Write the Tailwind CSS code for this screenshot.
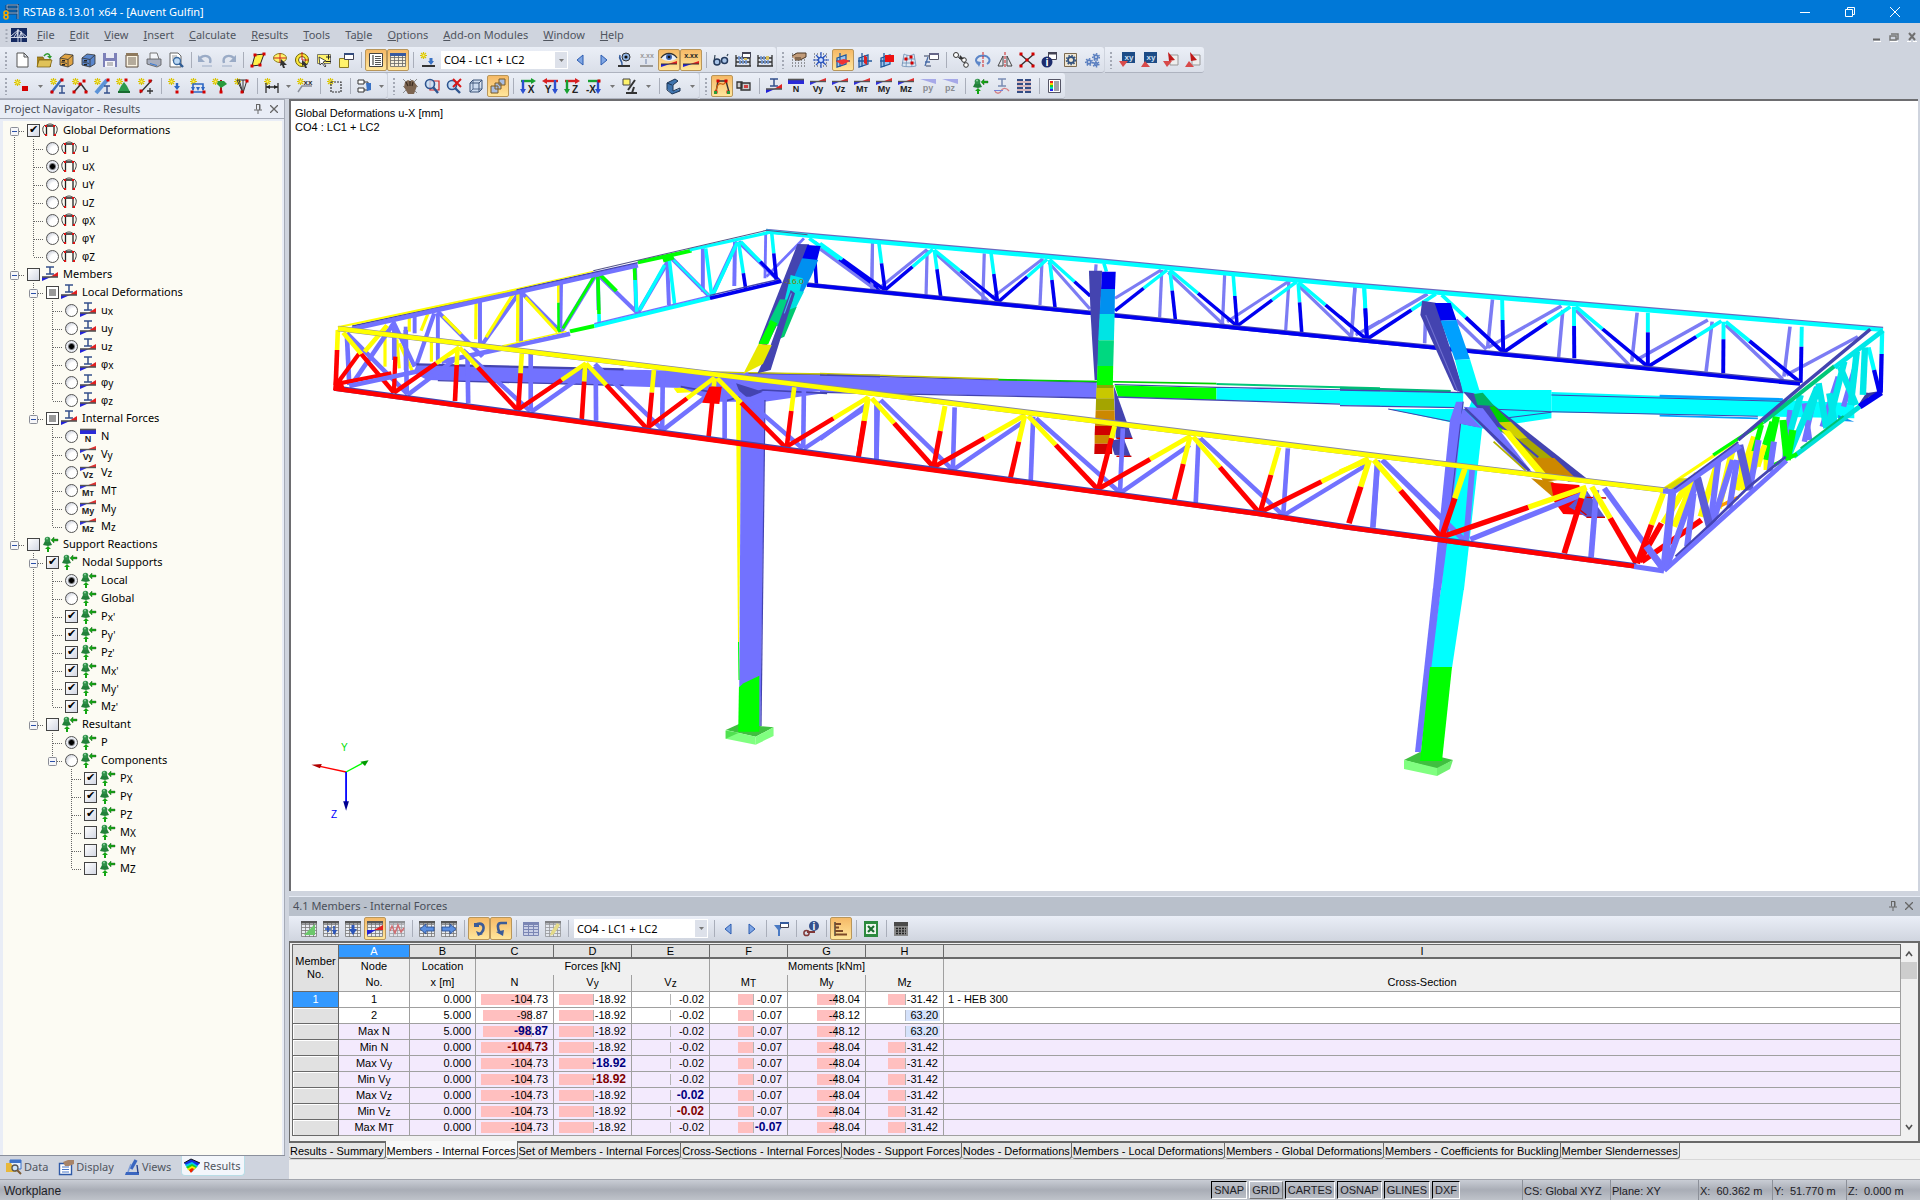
<!DOCTYPE html>
<html lang="en">
<head>
    <meta charset="UTF-8">
    <meta name="viewport" content="width=device-width, initial-scale=1.0">
    <title>RSTAB 8.13.01 x64 - [Auvent Gulfin]</title>
    <script src="https://cdn.jsdelivr.net/npm/@tailwindcss/browser@4"></script>
</head>
<body class="h-screen flex flex-col overflow-hidden bg-[#cfd4de] font-['Noto_Sans','Open_Sans',sans-serif] text-[11px] leading-4 text-black select-none">

    <!-- Title bar -->
    <header class="h-[23px] shrink-0 flex items-center bg-[#0078d7] text-white pl-[3px] pr-[2px]">
        <svg class="w-4 h-4 mr-1" viewBox="0 0 16 16"><path d="M4 1h11v14M4 1v4h11M5 9h10" fill="none" stroke="#1d3f66" stroke-width="3"/><path d="M4 1h11v14M4 1v4h11M5 9h10" fill="none" stroke="#8fb6dc" stroke-width="1"/><circle cx="3" cy="9" r="2" fill="none" stroke="#f0a800" stroke-width="1.6"/><circle cx="3" cy="13" r="2" fill="none" stroke="#f0a800" stroke-width="1.6"/></svg>
        <h1 class="flex-1">RSTAB 8.13.01 x64 - [Auvent Gulfin]</h1>
        <button class="w-[45px] h-full grid place-items-center" title="Minimize"><svg class="w-[10px] h-[10px]" viewBox="0 0 10 10"><path d="M0 5.500h10" stroke="#fff"/></svg></button>
        <button class="w-[45px] h-full grid place-items-center" title="Restore"><svg class="w-[10px] h-[10px]" viewBox="0 0 10 10"><path d="M.5 2.500h7v7h-7zM2.500 2.500v-2h7v7h-2" fill="none" stroke="#fff"/></svg></button>
        <button class="w-[46px] h-full grid place-items-center" title="Close"><svg class="w-[10px] h-[10px]" viewBox="0 0 10 10"><path d="M0 0l10 10M10 0L0 10" stroke="#fff"/></svg></button>
    </header>

    <!-- Menu -->
    <nav class="h-6 shrink-0 flex items-center pl-[5px] text-[#50555f]">
        <svg class="w-1 h-4 mr-[2px]" viewBox="0 0 4 16"><path d="M1.500 2v13" stroke="#a4a9b5" stroke-width="2" stroke-dasharray="2 2"/></svg>
        <svg class="w-4 h-[14px] mr-[3px]" viewBox="0 0 16 14"><path d="M0 0h16v14H0z" fill="#152a62"/><path d="M0 9.500h16M7 1v13M10 3v11M0 8l7-6 3 2 6 5M3 9l4-6M7 3l-1 6M10 5l-2 4M10 5l3 4" stroke="#e4e9f5" stroke-width=".9" fill="none"/></svg>
        <div class="flex-1 flex gap-px" id="menu"></div>
        <div class="flex gap-2 pr-[3px] pt-[3px] items-center">
            <svg class="w-2 h-3" viewBox="0 0 8 12"><path d="M0 8.500h7" stroke="#666" stroke-width="2"/><path d="M1 10.500h7" stroke="#fff"/></svg>
            <svg class="w-[10px] h-3" viewBox="0 0 10 12"><path d="M2 3h7v5H7M1 5h6v4H1z" fill="none" stroke="#777" stroke-width="1.500"/><path d="M1 10.500h8" stroke="#fff"/></svg>
            <svg class="w-[10px] h-3" viewBox="0 0 10 12"><path d="M2 2l6 7M8 2L2 9" stroke="#707070" stroke-width="2"/><path d="M0 10.500h4M6 10.500h4" stroke="#fff"/></svg>
        </div>
    </nav>

    <!-- Toolbars -->
    <div class="h-[26px] shrink-0 flex gap-px" id="bar1"></div>
    <div class="h-[26px] shrink-0 flex gap-px" id="bar2"></div>

    <main class="flex-1 min-h-0 flex">
        <!-- Navigator -->
        <aside class="w-[285px] shrink-0 flex flex-col">
            <div class="flex-1 min-h-0 flex flex-col border-t border-r border-[#a5aab6] bg-[#e9edf6]">
                <div class="h-[19px] flex items-center pl-1 pr-[2px] text-[#4a4f59] border-b border-[#a5aab6]">
                    <h2 class="flex-1">Project Navigator - Results</h2>
                    <button class="w-4 grid place-items-center" title="Auto hide"><svg class="w-2 h-[10px]" viewBox="0 0 8 10"><path d="M2 .5h4v5M2.500 .5v5M5.500 1v5M0 6h8M4 6v4" fill="none" stroke="#666"/></svg></button>
                    <button class="w-4 grid place-items-center" title="Close"><svg class="w-2 h-2" viewBox="0 0 8 8"><path d="M0 0l8 8M8 0L0 8" stroke="#666" stroke-width="1.300"/></svg></button>
                </div>
                <div id="tree" class="flex-1 overflow-hidden bg-[#fcfbf3] ml-[3px] mr-[2px] mt-[2px] pl-[2px] text-black"></div>
            </div>
            <div class="h-6 shrink-0 flex items-start pl-[3px] text-[#50555f] border-t border-[#8b909c]" id="navtabs"></div>
        </aside>

        <section class="flex-1 min-w-0 flex flex-col pl-1">
            <!-- Model view -->
            <div class="flex-1 min-h-0 bg-white border-t-2 border-l-2 border-[#6d6d70] mr-[2px] relative">
                <svg id="model" class="w-full h-full" viewBox="291 101 1627 790" preserveAspectRatio="xMinYMin meet"></svg>
                <div class="absolute left-1 top-[5px] font-['Liberation_Sans',sans-serif] text-[11px] leading-[14px]">
                    <p>Global Deformations u-X [mm]</p>
                    <p>CO4 : LC1 + LC2</p>
                </div>
            </div>

            <!-- Result table -->
            <div class="h-[6px] shrink-0 border-b border-[#e6ebf5]"></div>
            <div class="h-[19px] shrink-0 flex items-center bg-[#b9c0cb] pl-1 pr-[3px] pb-px text-[#4a4f59]">
                <h2 class="flex-1">4.1 Members - Internal Forces</h2>
                <button class="w-4 grid place-items-center" title="Auto hide"><svg class="w-2 h-[10px]" viewBox="0 0 8 10"><path d="M2 .5h4v5M2.500 .5v5M5.500 1v5M0 6h8M4 6v4" fill="none" stroke="#666"/></svg></button>
                <button class="w-4 grid place-items-center" title="Close"><svg class="w-2 h-2" viewBox="0 0 8 8"><path d="M0 0l8 8M8 0L0 8" stroke="#666" stroke-width="1.300"/></svg></button>
            </div>
            <div class="h-[25px] shrink-0 flex bg-gradient-to-b from-[#eaeef7] to-[#d0d5df] pl-px" id="bar3"></div>
            <div class="h-[202px] shrink-0 flex border-t-2 border-b-2 border-l border-r-2 border-[#696969] bg-[#f0f0f0] pt-px pl-[2px] font-['Liberation_Sans',sans-serif]">
                <table class="flex-1 table-fixed border-separate border-spacing-0 w-full self-start border-l border-t border-[#696969]">
                    <colgroup>
                        <col class="w-[46px]"><col class="w-[71px]"><col class="w-[66px]"><col class="w-[78px]"><col class="w-[78px]"><col class="w-[78px]"><col class="w-[78px]"><col class="w-[78px]"><col class="w-[78px]"><col>
                    </colgroup>
                    <thead id="thead"></thead>
                    <tbody id="tbody"></tbody>
                </table>
                <div class="w-4 shrink-0 mr-px flex flex-col items-center pt-[5px]">
                    <svg class="w-2 h-[10px]" viewBox="0 0 8 10"><path d="M1 7l3-4 3 4" fill="none" stroke="#505050" stroke-width="1.600"/></svg>
                    <div class="w-4 h-[17px] bg-[#cdcdcd] mt-[3px]"></div>
                    <div class="flex-1"></div>
                    <svg class="w-2 h-[10px] mb-[9px]" viewBox="0 0 8 10"><path d="M1 3l3 4 3-4" fill="none" stroke="#505050" stroke-width="1.600"/></svg>
                </div>
            </div>
            <div class="h-[17px] shrink-0 flex bg-[#f0f0f0] font-['Liberation_Sans',sans-serif] border-b border-[#d8d8d8]" id="tabs"></div>
            <div class="h-[19px] shrink-0 bg-[#f0f0f0]"></div>
        </section>
    </main>

    <!-- Status bar -->
    <footer class="h-[21px] shrink-0 flex items-stretch border-t border-[#a2a5ad] bg-gradient-to-b from-[#c9cdd5] via-[#a9adb6] to-[#bfc3ca] font-['Liberation_Sans',sans-serif] text-[#1e2126]">
        <span class="flex-1 pl-1 pt-[3px] text-[12px]">Workplane</span>
        <div class="flex gap-[2px] pt-px pb-px mr-[62px]" id="modes"></div>
        <span class="w-[88px] border-l border-[#8c9099] pl-px pt-[3px]">CS: Global XYZ</span>
        <span class="w-[88px] border-l border-[#8c9099] pl-px pt-[3px]">Plane: XY</span>
        <span class="w-[74px] border-l border-[#8c9099] pl-px pt-[3px] whitespace-pre">X:  60.362 m</span>
        <span class="w-[74px] border-l border-[#8c9099] pl-px pt-[3px] whitespace-pre">Y:  51.770 m</span>
        <span class="w-[74px] border-l border-[#8c9099] pl-px pt-[3px] whitespace-pre">Z:  0.000 m</span>
    </footer>

    <script>
    const $ = id => document.getElementById(id);

    // ---------- icons (16 x 16) ----------
    const p = (d, s, w = 1, f = 'none') => `<path d="${d}" stroke="${s}" stroke-width="${w}" fill="${f}"/>`;
    const fill = (d, f) => `<path d="${d}" fill="${f}"/>`;
    const txt = (t, x, y, c = '#222', s = 9) => `<text x="${x}" y="${y}" fill="${c}" font-size="${s}" font-weight="bold" font-family="Liberation Sans" text-anchor="middle">${t}</text>`;
    const spark = p('M3.500 0v7M0 3.500h7M1 1l5 5M6 1L1 6', '#d9c400', 1.200) + fill('M2.500 2.500h2v2h-2z', '#fff36b');
    const dots = (...a) => a.map(([x, y]) => fill(`M${x - 1.5} ${y - 1.5}h3v3h-3z`, '#d40000')).join('');
    const beam = (x, y) => p(`M${x} ${y}h6M${x} ${y + 7}h6M${x + 3} ${y}v7`, '#34508c', 1.400);
    const force = (t, c = '#222') => fill('M0 3h9L0 7z', '#3030dd') + fill('M16 0v3.500H7z', '#e03030') + p('M0 3.500h16', '#555', 1.400) + txt(t, 8, 14, c, 9);
    const drawer = c => fill('M2 6l5-4 8 1v9l-5 3-8-2z', c) + p('M2 6l8 1.500v7.500M10 7.500l5-4.500M3 10l6 1.500', '#333', .8) + p('M2 6l5-4 8 1v9l-5 3-8-2z', '#333', .8) + fill('M4 8h3v1.500H4zM4 12h3v1.500H4z', '#222');
    const sheet = p('M.5 .5h15v15H.5zM.5 3.500h15M.5 6.500h15M.5 9.500h15M.5 12.500h15M4.500 0v16M8.500 0v16M12.500 0v16', '#777', .8, '#e8ebf0') + fill('M0 0h16v2.500H0z', '#555');
    const axes = (t, a, b) => p('M1 3h12', a, 2.400) + p('M3 2v12', b, 2.400) + fill('M11 0l5 3-5 3z', a) + fill('M0 11h6l-3 5z', b) + txt(t, 11, 15, '#222', 10);
    const plane = c => fill('M2 6l9-3v9l-9 3z', '#9bc4ee') + p('M2 6l9-3v9l-9 3zM5 1v14M1 9h14', '#245a9c', 1.300) + c;
    const gear = (x, y, r, c) => `<circle cx="${x}" cy="${y}" r="${r}" fill="none" stroke="${c}" stroke-width="1.800"/><circle cx="${x}" cy="${y}" r="${r + 1.5}" fill="none" stroke="${c}" stroke-width="1.500" stroke-dasharray="1.500 1.500"/>`;
    const cube = p('M2 5h9v9H2zM2 5l3-3h9l-3 3M14 2v9l-3 3', '#3c5478', 1, '#cddcf0');
    const grid = p('M1 2h14M1 5h14M1 8h14M1 11h14M1 14h14', '#444', 1.200).replace('/>', ' stroke-dasharray="1 2"/>');
    const abacus = p('M1 3v11M15 3v11M1 6h14M1 10h14M0 14h16', '#333', 1.300) + p('M3 6h9M4 10h9', '#6d90c8', 3.400).replace('/>', ' stroke-dasharray="2 1"/>') + fill('M9 4h3v4H9z', '#d8c060');
    const icons = {
        new: p('M3 1h7l4 4v10H3zM10 1v4h4', '#555', 1, '#fff'),
        open: fill('M1 5h6l1 2h7v8H1z', '#a8841c') + fill('M3 8h13l-2 7H1z', '#e0c258') + p('M1 5h6l1 2M3 8h13l-2 7H1z', '#6d5610', .7) + p('M8 4c2-3 5-3 6 0', '#2f9a2f', 1.500) + fill('M11 4h5l-2 3z', '#2f9a2f'),
        cabA: drawer('#e0a445'), cabB: drawer('#5a86cc'),
        save: fill('M1 1h14v14H1z', '#7c80b8') + fill('M4 1h8v5H4z', '#e8eaf4') + fill('M3 9h10v6H3z', '#f4f4fa') + p('M5 11h6M5 13h6', '#888'),
        report: p('M2 3h12v12H2z', '#5a4b3d', 1, '#faf3e2') + fill('M2 1h12v3H2z', '#8f7a5e') + p('M4 6h8M4 8h8M4 10h8M4 12h8', '#6f6255'),
        print: fill('M4 1h7l2 6H3z', '#f4f6fa') + p('M4 1h7l2 6M4 1v6', '#777') + fill('M1 7h14v6l-4 2-10-3z', '#a9afbf') + p('M1 7h14v6l-4 2-10-3z', '#555', .8) + fill('M4 11l7 2v1l-7-2z', '#3478d4'),
        preview: p('M2 1h8l3 3v11H2z', '#666', 1, '#fff') + p('M4 4h5M4 6h4M4 8h3', '#999') + `<circle cx="9" cy="9" r="3.500" fill="#bcd9f5" stroke="#3b6aa0" stroke-width="1.300"/>` + p('M11.500 11.500L15 15', '#2f5c94', 2.400),
        undo: p('M2 6c5-4 12-2 10 5', '#9aabc6', 2.400) + fill('M0 3v7h7z', '#9aabc6') + p('M4 14h10', '#b3bfd3', 1.500),
        redo: p('M14 6C9 2 2 4 4 11', '#9aabc6', 2.400) + fill('M16 3v7H9z', '#9aabc6') + p('M2 14h10', '#b3bfd3', 1.500),
        selPoly: p('M5 3l9-1-4 11-8 1z', '#222', 1, '#fff04a') + dots([5, 3], [14, 2], [2, 14], [10, 13]),
        selLasso: `<ellipse cx="8" cy="6" rx="6.500" ry="4.500" fill="#fff36b" stroke="#8a7a20"/>` + p('M8 1v10M2 6h12', '#d02020') + fill('M9 7l6 6-3 0 1 3-2 0-1-3-2 1z', '#333'),
        selCirc: `<circle cx="8" cy="8" r="6.500" fill="#ffe93b" stroke="#6b6000"/><circle cx="8" cy="8" r="3.500" fill="#eef1f8" stroke="#6b6000"/>` + p('M8 0v8M8 8h6', '#d02020') + fill('M8 8l6 5-2 0 1 3-2 0-1-3-2 1z', '#333'),
        selRect: fill('M1 2h14v10H1z', '#fff36b') + p('M1.500 2.500h13v9h-13z', '#777') + fill('M3 5l7 4-3 1 3 4-1 1-3-4-2 2z', '#fff') + p('M3 5l7 4-3 1 3 4-1 1-3-4-2 2z', '#222', .8) + p('M10 5h5M12.500 2.500v5M10 9.500h5', '#222'),
        selWin: p('M1.500 6.500h9v9h-9z', '#8a7a20', 1, '#fff36b') + p('M6.500 1.500h9v6h-9z', '#445', 1, '#fff') + fill('M6 1h10v2H6z', '#334b7c'),
        navi: p('M1.500 1.500h13v13h-13z', '#444', 1, '#fff') + p('M4 4h2M4 6h2M4 8h2M4 10h2M4 12h2', '#222') + p('M7 4.500h6M7 6.500h6M7 8.500h6M7 10.500h6M7 12.500h6', '#555'),
        table: p('M.5 1.500h15v13H.5zM.5 5.500h15M.5 8.500h15M.5 11.500h15M4.500 4v10M8.500 4v10M12.500 4v10', '#666', .8, '#f6f0dc') + fill('M0 1h16v3H0z', '#375aa0'),
        loadNew: spark + p('M2 14h13', '#333', 2) + p('M11 6v5', '#3a72c4', 3) + fill('M8 9h6l-3 4z', '#3a72c4'),
        prev: p('M10 3v10L4 8z', '#2d5cb0', 1, '#7fa6e4'), next: p('M6 3v10l6-5z', '#2d5cb0', 1, '#7fa6e4'),
        eyeLoad: `<circle cx="9" cy="5" r="4" fill="#8fb4e4" stroke="#333"/><circle cx="9" cy="5" r="1.600" fill="#111"/>` + p('M3 3C1 8 6 8 5 13', '#345c9c', 1.600) + p('M1 14h12', '#333', 2),
        xxx: txt('x.xx', 8, 6, '#999', 7) + p('M7 7v5', '#a8b4cc', 2) + p('M1 14h13', '#999', 2),
        eyeRes: fill('M0 6c4-6 12-6 16 0-4 4-12 4-16 0z', '#e7eefa') + p('M0 6c4-6 12-6 16 0', '#333', 1.300) + `<circle cx="8" cy="5" r="3" fill="#3c62a8"/><circle cx="8" cy="5" r="1.300" fill="#111"/>` + fill('M0 12h9l-9 3z', '#2222d8') + fill('M16 9v3H7z', '#e02020') + p('M0 12h16', '#333'),
        xxxRes: txt('x.xx', 8, 6, '#222', 7) + fill('M0 12h9l-9 3z', '#2222d8') + fill('M16 9v3H7z', '#e02020') + p('M0 12h16', '#333'),
        glasses: p('M2 3l-1 7M14 4l1-2', '#345', 1.200) + `<circle cx="4" cy="10" r="3" fill="#a8c4e8" stroke="#23395c" stroke-width="1.500"/><circle cx="11.500" cy="8.500" r="3" fill="#a8c4e8" stroke="#23395c" stroke-width="1.500"/>`,
        abacusWin: abacus + p('M7.500 .5h8v5h-8z', '#445', 1, '#fff') + fill('M7 0h9v2H7z', '#445'),
        abacus: abacus,
        handGrid: grid + fill('M1 4l5-3 9 0v4l-6 3-5 0z', '#c09a78') + p('M1 4l5-3h9v4l-6 3-5 0M4 6l6 0', '#4d3826', 1),
        snapGrid: grid + p('M8 0v16M0 8h16M3 3l10 10M13 3L3 13', '#2b55c0', 1.200) + `<circle cx="8" cy="8" r="2.600" fill="#cfe0ff" stroke="#2b55c0" stroke-width="1.400"/>`,
        planeXY: plane(fill('M1 9l8-2 6 2-8 4z', '#e33')), planeYZ: plane(fill('M7 3l3 2v8l-3-2z', '#d22')), planeXZ: plane(fill('M6 3h9v7H6z', '#e11')),
        surf: p('M3 2c4 2 7 2 10 0l2 12c-4 1-10 1-14 0zM6 3L5 15M10 3l1 12M2 7h12M1 11h13', '#7795b8', .9, '#dfe9f5') + dots([5, 7], [10, 5], [11, 11]),
        note: p('M2 14l3-9M2 10h5', '#4a6da8', 1.300) + p('M6.500 1.500h9v6h-9z', '#556', 1, '#fff') + fill('M6 1h10v2H6z', '#668') + p('M1 4h5M3 14h5', '#8a93a8', 2),
        copyN: p('M3 3l10 9', '#333') + `<circle cx="3" cy="3" r="2.500" fill="#fff" stroke="#333"/><circle cx="11" cy="8" r="2.300" fill="#fff" stroke="#333"/><circle cx="13" cy="13" r="2.300" fill="#fff" stroke="#333"/>` + fill('M7 3l4 4h-5z', '#333'),
        rotate: p('M3 12C-2 7 4 3 8 4M12 12c6-4 0-9-4-8', '#5c86c8', 2) + fill('M1 9l5 1-2 5z', '#5c86c8') + p('M8 0v16', '#d02020').replace('/>', ' stroke-dasharray="3 1"/>'),
        mirror: p('M6 4v10H1zM10 4v10h5z', '#444', 1, '#e5e8f0') + p('M8 0v16', '#d02020').replace('/>', ' stroke-dasharray="3 1"/>'),
        cross: p('M1 2l14 12M15 2L1 14', '#333', 1.400) + dots([2, 2], [14, 2], [2, 14], [14, 14], [8, 8]),
        infoWin: p('M7.500 .5h8v7h-8z', '#445', 1, '#fff') + fill('M7 0h9v2.500H7z', '#445') + `<circle cx="6" cy="10" r="5.500" fill="#1d2c6c"/>` + txt('i', 6, 14, '#fff', 11),
        gearDoc: p('M1.500 1.500h12v13h-12z', '#7c6a50', 1, '#efe6d2') + gear(8, 8, 3, '#34537f'),
        gears: gear(4, 10, 1.800, '#5a7fc0') + gear(11, 5, 1.800, '#5a7fc0') + gear(11, 12, 1.300, '#5a7fc0'),
        xyA: fill('M3 0h13v11H3z', '#1d4c86') + txt('xy', 10, 8, '#cfe0f4', 8) + fill('M0 9h9l-5 6z', '#d84a4a'),
        xyB: fill('M3 0h13v11H3z', '#1d4c86') + txt('xy', 10, 8, '#cfe0f4', 8) + fill('M0 15h9l-5-6z', '#d84a4a'),
        pdfA: p('M7 3h8v10H7z', '#999', 1, '#eee') + fill('M5 0l7 8-6 1z', '#c01818') + fill('M0 9h9l-5 6z', '#d84a4a'),
        pdfB: p('M7 3h8v10H7z', '#999', 1, '#eee') + fill('M5 0l7 8-6 1z', '#c01818') + fill('M0 15h9L4 9z', '#d84a4a'),
        node: `<g transform="translate(0 1)">${spark}</g>` + fill('M8 8h6v5H8z', '#d40000'),
        member: spark + p('M1 15L12 1', '#3a6cb8', 2.400) + dots([12, 2], [2, 14]) + beam(9, 8),
        poly: spark + p('M2 14l7-8 6 8', '#333', 1.500) + dots([2, 14], [8, 6], [14, 14], [12, 3]),
        section: spark + p('M2 15L13 2', '#5b93d8', 4) + dots([14, 2]) + beam(10, 8),
        support: spark + fill('M5 8l3-4 3 4 3 6H2z', '#2c9a4c') + dots([10, 2]) + p('M2 14h12', '#196c30', 2),
        hinge: spark + p('M2 15L14 2M9 13h6M12 10v6', '#333', 1.300) + dots([12, 3], [3, 13]),
        loadN: spark + p('M9 5v5', '#2c66c4', 2.400) + fill('M6 8h6l-3 4z', '#2c66c4') + dots([9, 14]),
        loadM: spark + p('M3 12V6h10v6M1 14h14', '#2c66c4', 1.600) + fill('M1 9h4l-2 4zM11 9h4l-2 4zM6 9h4l-2 4z', '#2c66c4') + dots([2, 14], [14, 14]),
        loadP: spark + p('M9 2v12', '#b01010', 2) + fill('M6 3h6l3 3-6 4-4-4z', '#2a9a3c') + dots([9, 14]),
        loadF: spark + p('M3 2h10l-4 13zM5 2l4 13M9 2v13', '#333', 1) + dots([13, 3], [8, 14]),
        dim: spark + p('M2 5v10M14 5v10M2 9h12', '#333', 1.300) + fill('M2 9l4-2v4zM14 9l-4-2v4z', '#222'),
        dimX: spark + txt('xx', 11, 7, '#333', 8) + p('M1 14l4-6h10', '#8a8f9a', 1.500),
        box: spark + p('M4 4h10v10H4z', '#333', 1.200).replace('/>', ' stroke-dasharray="2 1"/>'),
        conn: p('M1 2h6v4H1zM1 10h6v4H1z', '#333', 1, '#fff') + p('M7 4h4v8H7', '#333') + fill('M9 5h5v7l-4 1z', '#3a72c4'),
        hand: p('M1 1l14 14M1 8l8 8M8 1l8 8M15 1L1 15', '#777', .8) + fill('M3 4l3-2 2 1 3-1 2 3 2 3-3 8H6L2 9z', '#7c6450') + p('M4 4l2 4M8 3v5M11 4l-1 4', '#3c2e22', 1.200),
        zoomR: p('M6 3h9v9H6z', '#d02020', 1.200) + `<circle cx="6" cy="6" r="4.500" fill="#c6ddf5" fill-opacity=".8" stroke="#2f5590" stroke-width="1.600"/>` + p('M9 9l5 6', '#2f5590', 2.400),
        zoomX: `<circle cx="6" cy="7" r="4.500" fill="#c6ddf5" stroke="#2f5590" stroke-width="1.600"/>` + p('M9 10l5 5', '#2f5590', 2.400) + p('M7 1l8 8M15 1L7 9', '#d81818', 2),
        iso: cube + p('M5 2v9H14M5 11l-3 3', '#3c5478', .8),
        layers: p('M1 8h7v7H1zM5 5h6v6H5zM9 1h6v6H9z', '#7a5a24', 1, '#a9bde0'),
        vx: axes('X', '#18a030', '#2c50d0'),
        vy: p('M3 3h13', '#d82020', 2.400) + p('M13 2v12', '#2c50d0', 2.400) + fill('M5 0L0 3l5 3z', '#d82020') + fill('M10 11h6l-3 5z', '#2c50d0') + txt('Y', 6, 15, '#222', 10),
        vz: axes('Z', '#d82020', '#18a030'),
        vmx: p('M2 3h12', '#18a030', 2.400) + p('M12 2v12', '#2c50d0', 2.400) + dots([13, 3]) + fill('M9 11h6l-3 5z', '#2c50d0') + txt('-X', 5, 15, '#222', 10),
        lamp: fill('M1 1h7v6H1z', '#fff36b') + p('M1 1h7v6H1z', '#444') + p('M13 2L6 12M4 15h11M10 15l2-6', '#333', 2),
        solid: fill('M1 5l8-4 3 2-5 4v6l7-2v2l-8 3-5-5z', '#3f74ae') + p('M1 5l8-4 3 2-5 4v6l7-3v3l-8 3-5-4zM1 5l5 2', '#1d3555', 1),
        frame: p('M2 14L4 3h8l3 11', '#333', 1.400) + p('M2 14C3 5 6 5 8 6s4-2 5-4', '#d06010', 1.300) + dots([2, 14], [14, 14], [4, 3], [12, 3]) + fill('M0 13h3v3H0zM13 13h3v3h-3z', '#2a9a3c'),
        film: p('M1 4h5v6H1zM5 5h9v7H5z', '#333', 1.300, '#ccc') + fill('M8 7h4v3H8z', '#d04040'),
        iDiag: p('M4 1h8M4 8h8M8 1v7', '#34508c', 1.500) + fill('M0 11h9l-9 4z', '#2222d8') + fill('M16 6v5H8z', '#e02020') + p('M0 11h16', '#555', 1.600),
        fN: fill('M0 2h16v4H0z', '#2a2ad8') + p('M0 1.500h16', '#555', 1.600) + txt('N', 8, 14, '#222', 9),
        fVy: force('Vy'), fVz: force('Vz'), fMt: force('Mт'), fMy: force('My'), fMz: force('Mz'),
        fpy: `<g opacity=".45">${fill('M0 1h16v5z', '#5a5add')}${txt('py', 8, 13, '#222', 9)}</g>`,
        fpz: `<g opacity=".45">${fill('M0 1h16v5z', '#5a5add')}${txt('pz', 8, 13, '#222', 9)}</g>`,
        supp: fill('M1 9l2-4h5l2 4-4 1z', '#23803a') + `<circle cx="5.500" cy="3.500" r="2.800" fill="#2f9148"/><circle cx="5" cy="2.500" r="1" fill="#8fd0a0"/>` + fill('M9 4l3-3v2h4v2h-4v2z', '#14a514') + p('M9 4l3-3v2h4v2h-4v2z', '#1f5a1f', .4) + fill('M6 10l3 3H7v3H5v-3H3z', '#14a514'),
        iWave: `<g opacity=".6">${p('M4 1h8M4 8h8M8 1v7', '#34508c', 1.500)}${p('M1 13c1 3 5 3 6 0s5-4 8 0', '#d04040', 1.300)}${p('M0 12.500h9', '#3344cc')}</g>`,
        multi: p('M1 2h6M9 2h6M1 6h6M9 6h6M1 10h6M9 10h6M1 14h6M9 14h6', '#334c84', 2) + p('M1 4h14M1 8h14M1 12h14', '#c88', 1),
        legend: p('M2.500 1.500h12v13h-12z', '#556', 1, '#fff') + fill('M4 3h3v2H4z', '#e22') + fill('M4 5h3v2H4z', '#fc0') + fill('M4 7h3v2H4z', '#2c2') + fill('M4 9h3v2H4z', '#0cc') + fill('M4 11h3v2H4z', '#22e') + p('M8 4h5M8 6h5M8 8h5M8 10h5M8 12h5', '#445'),
        tEdit: sheet + fill('M14 3v11H3z', '#6cc86c'), tPm: sheet + p('M2 8h6M5 5v6M11 5v8', '#2c55b8', 1.600) + fill('M9 9h5l-2.500 5z', '#2c55b8'),
        tDown: sheet + p('M8 4v6', '#2c55b8', 3) + fill('M4 8h8l-4 6z', '#2c55b8'), tDiag: sheet + fill('M0 9h9l-9 5z', '#2222d8') + fill('M16 4v5H7z', '#e02020'),
        tWave: `<g opacity=".6">${sheet}${p('M1 10l2-5 3 7 3-8 3 7 3-4', '#d02020', 1.400)}</g>`,
        tLeft: sheet + fill('M1 8l6-5v3h8v4H7v3z', '#5b8fe0') + p('M1 8l6-5v3h8v4H7v3z', '#234a90', .8), tRight: sheet + fill('M15 8L9 3v3H1v4h8v3z', '#5b8fe0') + p('M15 8L9 3v3H1v4h8v3z', '#234a90', .8),
        rotL: fill('M3 2h5v4H3z', '#3c5c98') + p('M6 3c7-2 9 5 3 10', '#3c5c98', 2.600) + fill('M5 10l7 3-5 2z', '#3c5c98'), rotR: p('M14 2H8C4 2 4 7 7 12', '#3c5c98', 2.600) + fill('M3 11l8-2-1 6z', '#3c5c98'),
        tGrid: p('M.5 1.500h15v13H.5zM.5 5.500h15M.5 8.500h15M.5 11.500h15M5.500 1v13M10.500 1v13', '#7b86b4', 1, '#c9cfe6') + fill('M0 1h16v3H0z', '#7b86b4'), tPen: `<g opacity=".7">${sheet}${fill('M12 2l3 2-6 9-4 2 1-4z', '#e8d860')}</g>`,
        funnel: fill('M1 4h9l-3 5v6H5V9z', '#4a7ac4') + p('M7.500 1.500h8v5h-8z', '#445', 1, '#fff') + fill('M7 1h9v2H7z', '#345a9c'),
        tInfo: `<circle cx="11" cy="5" r="5" fill="#34508c"/>` + txt('i', 11, 9, '#fff', 10) + `<circle cx="3.500" cy="12" r="2.600" fill="none" stroke="#803838" stroke-width="1.500"/>` + p('M4 11h8', '#803838', 2),
        bars: p('M2 1v14', '#333', 1.300) + p('M2 3h6M2 6.500h4M2 10h8M2 13.500h12', '#7d4a28', 2),
        excel: fill('M1 0h14v16H1z', '#2c8a3e') + fill('M3 3h10v10H3z', '#eef6ee') + p('M5 5l6 6M11 5l-6 6', '#1c7030', 2.200),
        calc: fill('M1 1h14v14H1z', '#8a8a8a') + fill('M1 1h14v4H1z', '#4a4a4a') + p('M3 7.500h10M3 10h10M3 12.500h10', '#222', 1.500).replace('/>', ' stroke-dasharray="2 1"/>'),
        gdef: p('M4.500 14V4h7.500v10', '#222', 1.300) + p('M4 3.500c2-2 6-2 8 0M3 13C0 9 0 5 3 3M13 13c3-4 3-8 0-10', '#444', 1) + fill('M3 3h2v2H3zM11 3h2v2h-2zM3 12h2v2H3zM12 12h2v2h-2z', '#e01010'),
        nData: p('M4 1h11v9H4z', '#3d72c8', 1, '#e4eefc') + fill('M4 1h11v3H4z', '#3d72c8') + fill('M0 4h5l1 2h4v7H0z', '#e8b83a') + `<circle cx="9" cy="9" r="3" fill="#cfe4fa" stroke="#555" stroke-width="1.300"/>` + p('M11 11l4 4', '#7c5a34', 2),
        nDisp: p('M1.500 4.500h12v11h-12z', '#2f5aa8', 1.400, '#fff') + p('M4 8h7M4 10.500h7M4 13h7', '#4a78c8') + fill('M5 3l5-2h6v4l-5 2H7z', '#a88468'),
        nView: fill('M2 13h13v3H1z', '#3a66c0') + p('M12 1L7 10', '#3a66c0', 3.400) + p('M4 13l3-8', '#7d9cd8', 1.600) + p('M13 6l1 8', '#26418c', 1.400),
        nRes: fill('M0 5l7-4 9 4-8 9z', '#1030e0') + fill('M1 7l7-3 6 4-7 6z', '#00c8f0') + fill('M2 9l6-3 5 3-6 5z', '#20d020') + fill('M3 11l5-3 4 2-5 4z', '#f4f000') + fill('M5 12l3-2 2 1-3 4z', '#f02000') + p('M0 5l7-4 9 4', '#111', 1)
    };
    const svg = n => `<svg class="w-4 h-4 shrink-0 overflow-visible" viewBox="0 0 16 16">${icons[n]}</svg>`;

    // "*" marks a pressed button, "|" a separator, "v" / "V" a drop arrow
    const arrow = '<svg class="w-[5px] h-[3px]" viewBox="0 0 5 3"><path d="M0 0h5L2.500 3z" fill="#777"/></svg>';
    const combo = w => `<span class="${w} relative my-[3px] mx-[2px] flex bg-white">
                <select aria-label="Load case" class="appearance-none w-full h-full pl-[3px] text-[11px] leading-4 bg-white outline-none"><option>CO4 - LC1 + LC2</option></select>
                <i class="absolute right-0 inset-y-0 w-[14px] grid place-items-center bg-[#dde1ea] border border-white pointer-events-none">${arrow}</i></span>`;
    function toolbar(spec, boxed) {
        const items = spec.split(' ').map(t => {
            if (t === '|') return '<span class="w-2 flex justify-center py-1"><i class="w-px bg-[#a9aeba]"></i></span>';
            if (t === 'v') return `<button class="w-[11px] grid place-items-center" title="More">${arrow}</button>`;
            if (t === 'V') return `<button class="w-[14px] grid place-items-center" title="More">${arrow}</button>`;
            if (t === 'grip') return '<span class="w-[11px] grid place-items-center"><svg class="w-[2px] h-[18px]" viewBox="0 0 2 18"><path d="M1 1v17" stroke="#a4a9b5" stroke-width="2" stroke-dasharray="2 2"/></svg></span>';
            if (t === 'gap') return '<span class="w-2"></span>';
            if (t === 'combo') return combo('w-[127px]');
            if (t === 'comboWide') return combo('w-[134px]');
            const on = t[0] === '*', name = on ? t.slice(1) : t;
            return `<button title="${name}" class="${on ? 'w-[22px] my-px grid place-items-center rounded-[2px] border border-[#b9965a] bg-gradient-to-b from-[#f5b966] to-[#ffe69b]' : 'w-[22px] grid place-items-center'}">${svg(name)}</button>`;
        }).join('');
        return boxed ? `<div class="flex pt-px rounded-r-[3px] border-b border-[#aeb3bf] bg-gradient-to-b from-[#ebeff7] to-[#dadfe9]">${items}</div>` : items;
    }
    $('bar1').innerHTML = [
        'grip new open cabA cabB save report print preview | undo redo | selPoly selLasso selCirc selRect selWin | *navi *table | loadNew combo prev next eyeLoad xxx *eyeRes *xxxRes | glasses abacusWin abacus',
        'grip handGrid snapGrid *planeXY planeYZ planeXZ surf note | copyN rotate mirror cross infoWin gearDoc gears',
        'grip xyA xyB pdfA pdfB'].map(s => toolbar(s, true)).join('');
    $('bar2').innerHTML = [
        'grip node V member poly section support hinge | loadN loadM loadP loadF | dim v dimX | box | conn v',
        'grip hand zoomR zoomX iso *layers | vx vy vz vmx V lamp V | solid V',
        'grip *frame film | iDiag fN fVy fVz fMt fMy fMz fpy fpz | supp iWave multi | legend'].map(s => toolbar(s, true)).join('');
    $('bar3').innerHTML = toolbar('gap tEdit tPm tDown *tDiag tWave | tLeft tRight | *rotL *rotR | tGrid tPen | comboWide | prev next | funnel | tInfo | *bars | excel | calc');

    $('menu').innerHTML = ['_File', '_Edit', '_View', '_Insert', '_Calculate', '_Results', '_Tools', 'Ta_ble', '_Options', '_Add-on Modules', '_Window', '_Help']
        .map(m => `<button class="px-[7px]">${m.replace(/_(.)/, '<u>$1</u>')}</button>`).join('');

    // ---------- navigator tree: [level, control, icon, label, sub, expander] ----------
    const rows = [
        [0, 'C', 'gdef', 'Global Deformations', '', 1], ...['u', 'u:X', 'u:Y', 'u:Z', 'φ:X', 'φ:Y', 'φ:Z'].map((t, i) => [1, i === 1 ? 'R' : 'r', 'gdef', ...t.split(':')]),
        [0, 'c', 'iDiag', 'Members', '', 1],
        [1, 'm', 'iDiag', 'Local Deformations', '', 1], ...['u:x', 'u:y', 'u:z', 'φ:x', 'φ:y', 'φ:z'].map((t, i) => [2, i === 2 ? 'R' : 'r', 'iDiag', ...t.split(':')]),
        [1, 'm', 'iDiag', 'Internal Forces', '', 1], [2, 'r', 'fN', 'N'], [2, 'r', 'fVy', 'V', 'y'], [2, 'r', 'fVz', 'V', 'z'], [2, 'r', 'fMt', 'M', 'T'], [2, 'r', 'fMy', 'M', 'y'], [2, 'r', 'fMz', 'M', 'z'],
        [0, 'c', 'supp', 'Support Reactions', '', 1], [1, 'C', 'supp', 'Nodal Supports', '', 1], [2, 'R', 'supp', 'Local'], [2, 'r', 'supp', 'Global'],
        ...['P:x\'', 'P:y\'', 'P:z\'', 'M:x\'', 'M:y\'', 'M:z\''].map(t => [2, 'C', 'supp', ...t.split(':')]),
        [1, 'c', 'supp', 'Resultant', '', 1], [2, 'R', 'supp', 'P'], [2, 'r', 'supp', 'Components', '', 1],
        ...['P:X', 'P:Y', 'P:Z', 'M:X', 'M:Y', 'M:Z'].map((t, i) => [3, i < 3 ? 'C' : 'c', 'supp', ...t.split(':')])
    ];
    const hasNext = (i, l) => { for (let k = i + 1; k < rows.length; k++) { if (rows[k][0] === l) return true; if (rows[k][0] < l) return false; } return false; };
    const dot = d => `<path d="${d}" stroke="#666" stroke-dasharray="1 1"/>`;
    const ctl = {
        check: "appearance-none w-[13px] h-[13px] shrink-0 border border-[#444] bg-gradient-to-br from-white to-[#d4d8e4] relative before:hidden before:absolute before:left-px before:-top-[3px] before:content-['✔'] before:font-['DejaVu_Sans'] before:text-[11px] before:leading-4 checked:before:block",
        mixed: 'appearance-none w-[13px] h-[13px] shrink-0 border border-[#444] bg-white bg-[linear-gradient(#999,#999)] bg-[length:7px_7px] bg-center bg-no-repeat',
        radio: 'appearance-none w-[13px] h-[13px] shrink-0 rounded-full border border-[#555] bg-[radial-gradient(circle_at_70%_70%,#fff_40%,#b6bccb)] checked:bg-[radial-gradient(circle_at_50%_50%,#000_2px,#e8ebf2_4px)]'
    };
    $('tree').innerHTML = rows.map(([lv, c, ic, label, sub, exp], i) => {
        let g = '';
        for (let l = 0; l <= lv; l++) {
            let s = '';
            if (l < lv && hasNext(i, l)) s = dot('M9.500 0v18');
            if (l === lv) {
                s = (i ? dot('M9.500 0v10') : '') + (hasNext(i, l) ? dot('M9.500 10v8') : '') + dot('M10 10.500h10');
                if (exp) s += '<rect x="5.500" y="6.500" width="8" height="8" rx="1" fill="#f6f6f8" stroke="#8a8d96"/><path d="M7 10.500h5" stroke="#2b50a8"/>';
            }
            g += `<svg class="w-[19px] h-[18px] shrink-0" viewBox="0 0 19 18">${s}</svg>`;
        }
        const radio = c === 'r' || c === 'R';
        const name = i < 8 ? 'global' : i < 16 ? 'local' : i < 23 ? 'force' : i < 33 ? 'support' : 'resultant';
        const input = `<input type="${radio ? 'radio' : 'checkbox'}" ${radio ? `name="${name}"` : ''} class="${radio ? ctl.radio : c === 'm' ? ctl.mixed : ctl.check}" ${c === 'C' || c === 'R' ? 'checked' : ''}>`;
        const text = label === 'φ' ? `<span class="font-['Liberation_Sans']">φ</span>` : label;
        return `<label class="h-[18px] flex items-center whitespace-nowrap">${g}<span class="w-[3px] shrink-0"></span>${input}<span class="w-[2px] shrink-0"></span>${svg(ic)}<span class="pl-[5px]">${text}${sub ? `<sub class="text-[10px] -bottom-px">${sub}</sub>` : ''}</span></label>`;
    }).join('');

    $('navtabs').innerHTML = [['nData', 'Data'], ['nDisp', 'Display'], ['nView', 'Views'], ['nRes', 'Results']]
        .map(([ic, t]) => `<button class="${t === 'Results' ? 'h-5 flex items-center gap-[3px] pl-[2px] pr-1 ml-[3px] rounded-b-[4px] bg-[#f3f6fb] border border-t-0 border-[#b9dde6]' : 'h-[22px] flex items-center gap-[2px] pl-[3px] pr-[7px]'}">${svg(ic)}${t}</button>`).join('');

    // ---------- result table ----------
    const hd = 'border-r border-[#a0a0a0] bg-[#f0f0f0] font-normal h-4 p-0 pb-[2px] leading-[14px] overflow-hidden';
    $('thead').innerHTML = `<tr class="h-[14px]">
        <th rowspan="3" class="border-r border-b border-[#696969] bg-[#e1e1e1] font-normal leading-[13px] p-0 align-middle">Member<br>No.</th>
        ${[...'ABCDEFGHI'].map(l => `<th class="${l === 'A' ? 'h-[14px] border-r border-b-2 border-[#696969] bg-[#3399ff] text-white font-normal leading-3 p-0' : 'h-[14px] border-r border-b-2 border-[#696969] bg-[#e1e1e1] font-normal leading-3 p-0'}">${l}</th>`).join('')}</tr>
        <tr><th class="${hd}">Node</th><th class="${hd}">Location</th><th colspan="3" class="${hd}">Forces [kN]</th><th colspan="3" class="${hd}">Moments [kNm]</th><th class="${hd}"></th></tr>
        <tr>${['No.', 'x [m]', 'N', 'V<sub>y</sub>', 'V<sub>z</sub>', 'M<sub>T</sub>', 'M<sub>y</sub>', 'M<sub>z</sub>', 'Cross-Section'].map(t => `<th class="${hd} border-b">${t.replace('<sub>', '<sub class="text-[10px] leading-[1] -bottom-px">')}</th>`).join('')}</tr>`;
    // [node, x, N, My, Mz, column with the extreme value]
    const data = [['1', '0.000', '-104.73', '-48.04', '-31.42', -1], ['2', '5.000', '-98.87', '-48.12', '63.20', -1], ['Max N', '5.000', '-98.87', '-48.12', '63.20', 0], ['Min N', '0.000', '-104.73', '-48.04', '-31.42', 0],
        ['Max V|y', '0.000', '-104.73', '-48.04', '-31.42', 1], ['Min V|y', '0.000', '-104.73', '-48.04', '-31.42', 1], ['Max V|z', '0.000', '-104.73', '-48.04', '-31.42', 2], ['Min V|z', '0.000', '-104.73', '-48.04', '-31.42', 2], ['Max M|T', '0.000', '-104.73', '-48.04', '-31.42', 3]];
    const barPos = [[5, 50], [5, 34], [38, 0], [28, 15], [29, 18], [22, 17]];
    $('tbody').innerHTML = data.map((r, i) => {
        const [node, x, n, my, mz, ext] = r, tint = i > 1;
        const vals = [n, '-18.92', '-0.02', '-0.07', my, mz];
        const td = tint ? 'h-4 p-0 leading-[15px] border-r border-b border-[#a0a0a0] bg-[#f3eafd]' : 'h-4 p-0 leading-[15px] border-r border-b border-[#a0a0a0] bg-white';
        const cells = vals.map((v, k) => {
            let [l, w] = barPos[k];
            if (n === '-98.87' && k === 0) { l += 2; w -= 2; }
            const pos = v === '63.20';
            const bar = pos ? '<i class="absolute left-[39px] top-[2px] h-[11px] w-[35px] bg-[#d5e2fb] border-l border-[#b4b8c4]"></i>'
                : `<i class="absolute top-[2px] h-[11px] bg-[#ffbfbf] border-r border-[#b4b4b4]" style="left:${l}px;width:${w + 1}px"></i>`;
            const bold = ext === k ? (node.startsWith('Max') ? 'relative font-bold text-[12px] text-[#000080]' : 'relative font-bold text-[12px] text-[#800000]') : 'relative';
            return `<td class="${td}"><div class="relative h-[15px] pr-[5px] text-right">${bar}<span class="${bold}">${v}</span></div></td>`;
        }).join('');
        return `<tr><th class="${i ? 'h-4 p-0 leading-[15px] font-normal border-r border-b border-[#696969] bg-[#e1e1e1] shadow-[inset_1px_1px_0_#fff]' : 'h-4 p-0 leading-[15px] font-normal border-r border-b border-[#696969] bg-[#3399ff] text-white'}">${i ? '' : '1'}</th>
            <td class="${td} text-center">${node.replace(/\|(.)/, '<sub class="text-[10px] leading-[1] -bottom-px">$1</sub>')}</td><td class="${td} text-right"><span class="pr-1">${x}</span></td>${cells}<td class="${td}"><span class="pl-1">${i ? '' : '1 - HEB 300'}</span></td></tr>`;
    }).join('');

    $('tabs').innerHTML = ['Results - Summary', 'Members - Internal Forces', 'Set of Members - Internal Forces', 'Cross-Sections - Internal Forces', 'Nodes - Support Forces', 'Nodes - Deformations', 'Members - Local Deformations', 'Members - Global Deformations', 'Members - Coefficients for Buckling', 'Member Slendernesses']
        .map((t, i) => `<button class="${i === 1 ? 'px-px leading-[14px] whitespace-nowrap bg-[#f8f8f8] border-r border-b border-[#696969] rounded-b-[3px] -mt-[2px] pt-[2px]' : 'px-px leading-[15px] whitespace-nowrap bg-[#e6e6e6] border-r border-b border-[#696969] rounded-b-[3px] pt-px'}">${t}</button>`).join('');
    $('modes').innerHTML = ['SNAP', 'GRID', 'CARTES', 'OSNAP', 'GLINES', 'DXF']
        .map(t => `<button class="${t === 'GRID' ? 'px-[2px] leading-4 border border-t-white border-l-white border-b-[#777] border-r-[#777]' : 'px-[2px] leading-4 border border-t-black border-l-black border-b-white border-r-white'}">${t}</button>`).join('');

    // ---------- model ----------
    const P = '#7272ff', PD = '#4444b0', Y = '#ffff00', R = '#ff0000', C = '#00ffff', B = '#0000f0', G = '#00ff00';
    const L = (c, w, ...ls) => ls.map(a => {
        let d = `M${a[0]} ${a[1]}`;
        for (let i = 2; i < a.length; i += 2) d += `L${a[i]} ${a[i + 1]}`;
        return `<path d="${d}" stroke="${c}" stroke-width="${w}" fill="none"/>`;
    }).join('');
    const F = (c, ...pts) => `<polygon points="${pts.join(' ')}" fill="${c}"/>`;
    // two-coloured bars: colour a above height ys, colour b below it
    const T = (a, b, w, ...ls) => ls.map(([x1, y1, x2, y2, ys]) => {
        if (y1 > y2) [x1, y1, x2, y2] = [x2, y2, x1, y1];
        const xm = x1 + (x2 - x1) * (ys - y1) / (y2 - y1);
        return L(a, w, [x1, y1, xm, ys]) + L(b, w, [xm, ys, x2, y2]);
    }).join('');
    const tile = (x, y, s) => `<g transform="translate(${x} ${y}) scale(.35714 .33333)">${s}</g>`;
    const W = s => tile(320, 210, s), M = s => tile(820, 220, s), E = s => tile(1340, 260, s), S = s => tile(280, 640, s);

    $('model').innerHTML =
    // far truss
    W(L(P, 8, [1385, 95, 1560, 237], [1547, 95, 1545, 225], [1250, 200, 1355, 85], [1248, 70, 1246, 205]) + T(C, B, 11, [1370, 85, 1568, 240, 150]) + L(B, 10, [1385, 140, 1390, 222])) +
    M(L('#7c7cf4', 9, [147, 68, 145, 208], [300, 90, 297, 225], [460, 100, 456, 240], [622, 115, 616, 255], [773, 133, 770, 180], [957, 150, 951, 292], [1133, 165, 1127, 310], [1313, 185, 1304, 330], [1498, 200, 1488, 350],
        [0, 87, 155, 209], [165, 205, 300, 88], [320, 97, 470, 242], [480, 235, 622, 118], [640, 127, 756, 267], [826, 235, 955, 150], [975, 157, 1130, 314], [1140, 305, 1315, 182], [1340, 197, 1490, 352], [1500, 345, 1568, 303]) +
      T(C, B, 10, [165, 70, 182, 210, 130], [479, 100, 497, 245, 162], [1157, 165, 1168, 318, 228], [1523, 200, 1532, 360, 265], [320, 90, 338, 230, 148], [643, 120, 658, 262, 180], [980, 152, 995, 298, 212], [1339, 190, 1349, 340, 247],
        [0, 70, 182, 210, 118], [182, 210, 316, 88, 140], [320, 90, 500, 245, 153], [500, 245, 636, 118, 170], [643, 118, 757, 228, 185], [826, 272, 972, 150, 205], [980, 150, 1168, 318, 220], [1168, 318, 1335, 185, 240], [1340, 187, 1530, 358, 255]) +
      L(C, 10, [795, 130, 802, 155])) +
    E(L('#7c7cf4', 10, [42, 80, 32, 230], [240, 160, 237, 250], [65, 215, 245, 102], [427, 118, 413, 265], [325, 180, 410, 268], [415, 262, 620, 138], [624, 150, 612, 292], [660, 150, 810, 315], [832, 158, 817, 305], [830, 300, 1030, 180], [1042, 185, 1025, 335], [1080, 195, 1240, 358], [1260, 200, 1243, 350], [1250, 345, 1450, 230]) +
      T(C, B, 11, [68, 80, 75, 238, 145], [75, 238, 268, 102, 150], [285, 105, 455, 275, 172], [454, 118, 457, 275, 180], [456, 278, 645, 140, 188], [655, 140, 656, 295, 198], [660, 140, 862, 320, 207], [862, 158, 862, 318, 217], [862, 320, 1068, 183, 230], [1074, 185, 1073, 340, 238], [1080, 185, 1290, 368, 243], [1293, 200, 1290, 368, 260]) + L(B, 9, [0, 170, 75, 238])) +
    L(PD, 4.600, [807, 284.500, 820, 286, 1098, 313.500, 1380, 342, 1800, 383]) + L(B, 3.600, [807, 285, 820, 286, 1098, 314, 1380, 342.500, 1800, 384]) +
    L('#6a6ac0', 4.600, [766, 231, 820, 236, 1100, 260.500, 1340, 283.500, 1883, 329]) + L(C, 4.200, [766, 231.500, 820, 237, 1100, 261.500, 1340, 284.500, 1883, 330]) +

    // back left truss
    W(L(P, 12, [205, 335, 265, 470], [320, 310, 270, 465], [330, 305, 455, 440], [560, 245, 455, 402], [562, 245, 675, 367], [675, 365, 775, 190], [775, 190, 890, 310], [890, 308, 978, 148], [985, 145, 1095, 264], [1095, 262, 1168, 95], [1172, 95, 1285, 212]) +
      L(P, 11, [448, 275, 448, 400], [563, 245, 563, 397], [675, 210, 673, 355], [778, 190, 780, 300], [882, 165, 885, 300], [972, 150, 977, 285], [1072, 115, 1072, 245], [1162, 95, 1160, 228], [265, 320, 265, 370], [330, 310, 330, 460], [240, 350, 240, 480]) +
      L(Y, 9, [437, 275, 436, 388], [541, 252, 465, 382], [554, 250, 553, 395], [575, 262, 665, 367], [250, 322, 250, 365], [302, 312, 283, 362], [312, 390, 312, 455], [182, 350, 182, 470], [215, 388, 222, 475], [222, 400, 258, 482], [345, 318, 395, 372]) +
      T(Y, G, 7, [667, 218, 668, 362, 278]) + L(G, 8, [680, 355, 772, 192], [665, 350, 672, 366]) + L(G, 11, [780, 190, 830, 243]) + T(G, C, 10, [778, 200, 782, 342, 312], [880, 165, 887, 305, 210]) +
      L(C, 10, [978, 148, 993, 283], [1080, 115, 1097, 260], [1100, 255, 1168, 98], [895, 300, 965, 165]) + L(C, 6, [990, 150, 1093, 260]) + T(C, B, 10, [1172, 95, 1192, 237, 190], [1178, 95, 1285, 212, 155], [1265, 70, 1278, 210, 130]) +
      L(P, 14, [340, 455, 700, 371]) + L(Y, 4, [510, 408, 690, 364]) + L(G, 12, [700, 364, 768, 348]) + L(C, 12, [768, 348, 1092, 264]) + L(P, 4, [768, 341, 1092, 257]) + L(PD, 4, [1092, 256, 1285, 208]) + L(B, 11, [1092, 265, 1292, 214]) +
      L(P, 14, [90, 357, 890, 166]) + L(PD, 4, [90, 348, 890, 158]) + L(Y, 6, [50, 352, 550, 238]) + L(Y, 3, [550, 236, 765, 184]) + L(G, 12, [890, 157, 1040, 122]) + L(C, 10, [1035, 120, 1255, 68]) + L('#555588', 3, [765, 182, 1250, 61, 1365, 74]) + L(G, 16, [960, 150, 990, 140])) +

    // middle beam
    W(F(P, 270, 465, 1200, 487, 1568, 495, 1568, 548, 1190, 540, 300, 510, 262, 488) + L(PD, 7, [270, 463, 850, 478]) + L(PD, 4, [330, 512, 850, 526], [1200, 490, 1568, 496]) + L('#cccc00', 4, [1000, 484, 1190, 488], [1200, 488, 1420, 492]) +
      F(Y, 990, 535, 1040, 530, 1070, 545, 1000, 549) + F(P, 1010, 530, 1180, 520, 1420, 548, 1245, 575, 1100, 575) + L(PD, 5, [1010, 530, 1090, 545], [1130, 575, 1240, 540, 1420, 550])) +
    M(F(P, 0, 468, 775, 488, 775, 533, 0, 516) + L(PD, 4, [0, 465, 775, 487], [0, 517, 775, 534]) + L('#cccc00', 4, [0, 460, 500, 477]) + L('#00d000', 5, [500, 479, 1110, 491]) +
      L('#00c878', 6, [1110, 492, 1568, 505]) + L(PD, 4, [825, 494, 1110, 502, 1568, 512]) + F(G, 825, 496, 1110, 504, 1110, 540, 835, 530) + F(C, 1110, 504, 1568, 514, 1568, 554, 1110, 540) + L(PD, 4, [830, 531, 1568, 556])) +

    // far ties and rear of the right column
    E(F(C, 0, 392, 345, 398, 345, 443, 0, 435) + L('#00b878', 8, [0, 384, 310, 394]) + L(PD, 4, [0, 390, 345, 398], [0, 437, 330, 443]) + F(C, 380, 390, 592, 390, 592, 475, 395, 506, 135, 447, 360, 447) +
      F(C, 592, 396, 1240, 420, 1440, 430, 1440, 475, 592, 457) + L('#00a0ff', 7, [895, 408, 1240, 418]) + L('#00a0ff', 5, [895, 467, 1170, 475]) + L(PD, 3, [592, 405, 1240, 424], [415, 447, 592, 455, 1170, 469], [135, 447, 385, 500], [470, 473, 592, 457]) +
      F('#1090f0', 1395, 465, 1440, 485, 1395, 482) + F(C, 330, 490, 398, 505, 347, 990, 283, 990) + F(P, 325, 425, 345, 425, 325, 640, 283, 990, 260, 990, 308, 480) + L(PD, 3, [345, 425, 325, 600, 298, 850]) + F(P, 345, 445, 398, 505, 330, 490)) +
    F(C, 1441, 588, 1464, 588, 1452, 668, 1430, 668) + F(P, 1433, 588, 1441, 588, 1421, 752, 1415, 752) +
    F('#40c040', 1404, 760, 1420, 752, 1453, 760, 1437, 769) + F('#80ff80', 1404, 760, 1437, 768, 1437, 776, 1404, 769) + F('#70f070', 1437, 768, 1453, 760, 1450, 769, 1437, 776) +
    F(G, 1430, 667, 1452, 667, 1442, 761, 1420, 761) +

    // left column
    F(Y, 736, 400, 741.500, 400, 739, 642, 738, 642) + F(P, 741, 395, 765, 395, 760.500, 727, 739, 727) + L(PD, 1.200, [765, 400, 761, 726]) + L(G, 1, [738.500, 642, 739, 680]) +
    S(F('#40c040', 1248, 270, 1285, 252, 1382, 262, 1332, 290) + F('#80ff80', 1248, 270, 1332, 290, 1332, 314, 1248, 296) + F('#80ff80', 1332, 290, 1382, 262, 1382, 288, 1332, 314) + F('#50e050', 1248, 272, 1285, 278, 1248, 296) +
      F(G, 1285, 142, 1298, 130, 1342, 107, 1342, 275, 1283, 275)) +

    // struts
    W(F(PD, 1337, 102, 1370, 103, 1330, 240, 1250, 408, 1228, 400) + F(B, 1365, 105, 1402, 108, 1392, 150, 1388, 185, 1350, 147) + F('#0090f0', 1350, 145, 1395, 150, 1375, 200, 1350, 252, 1310, 245) + F('#00e4e8', 1318, 195, 1352, 205, 1340, 255, 1300, 275) +
      F('#00e0e0', 1325, 240, 1355, 245, 1320, 320, 1290, 310) + F('#00d080', 1288, 268, 1325, 270, 1285, 350, 1255, 340) + F(G, 1262, 330, 1280, 340, 1255, 403, 1228, 402) + F('#00c870', 1312, 300, 1335, 290, 1300, 380, 1280, 390) + F(PD, 1318, 240, 1330, 250, 1300, 350, 1262, 480, 1225, 490, 1262, 405) +
      F('#e8e800', 1228, 402, 1265, 405, 1240, 462, 1185, 492) + L('#4be', 3, [1320, 250, 1300, 310]) + `<text x="1300" y="223" font-size="24" fill="#808000" font-family="Liberation Sans">-16.0</text>` +
      F(PD, 1165, 520, 1240, 545, 1205, 560, 1180, 560)) +
    M(F(PD, 753, 152, 790, 152, 776, 480, 769, 480, 758, 290) + F(B, 790, 155, 828, 155, 826, 207, 787, 207) + F('#0090f0', 787, 207, 826, 207, 825, 282, 783, 282) + F('#00e4e4', 783, 282, 825, 282, 823, 361, 779, 361) + F('#00d880', 779, 361, 823, 361, 821, 438, 777, 438) +
      F(G, 777, 438, 821, 438, 820, 495, 775, 495) + F('#88aa00', 775, 495, 822, 495, 822, 504, 775, 504) + F('#c8c800', 774, 504, 822, 504, 823, 535, 773, 535) + F('#a4a400', 773, 535, 823, 535, 825, 571, 772, 571) + F('#cc8800', 772, 571, 825, 571, 826, 618, 770, 618) +
      F('#d00000', 770, 618, 826, 618, 826, 645, 769, 645) + F('#cc8800', 769, 645, 826, 645, 820, 671, 769, 671) + F('#d00000', 769, 671, 818, 671, 818, 702, 768, 702) + F(PD, 823, 498, 875, 655, 828, 655) + F(PD, 812, 662, 850, 655, 870, 709, 825, 705) + L('#d00000', 4, [830, 655, 875, 655], [830, 709, 872, 709])) +
    E(F(PD, 230, 122, 268, 128, 348, 400, 320, 390, 225, 165) + L('#7070d0', 3, [240, 165, 330, 395]) + F(B, 265, 129, 310, 129, 326, 180, 282, 182) + F('#00a0ff', 282, 182, 326, 180, 364, 298, 322, 300) + F(C, 322, 300, 364, 298, 393, 400, 345, 400) +
      F(PD, 345, 395, 375, 400, 430, 435, 690, 655, 640, 665, 420, 490) + F('#00b464', 375, 402, 400, 398, 432, 438, 385, 435) + F('#00d000', 418, 440, 432, 438, 478, 487, 445, 487) + F('#d0d000', 445, 487, 478, 485, 525, 535, 475, 540) + F('#a8a800', 475, 537, 525, 535, 595, 595, 530, 600) +
      F('#cc8800', 530, 594, 600, 594, 660, 655, 570, 665) + L(PD, 6, [430, 480, 555, 592]) + F(Y, 450, 508, 475, 512, 580, 645, 555, 645) + F(G, 440, 500, 452, 505, 452, 530, 440, 520) + F(P, 345, 440, 400, 445, 540, 640, 510, 625) + L(PD, 8, [350, 445, 530, 632]) + L('#b0b000', 5, [430, 545, 520, 632]) +
      F('#cc8800', 535, 655, 595, 665, 640, 700, 595, 710) + F(R, 590, 668, 670, 675, 690, 765, 625, 762, 600, 725) + F('#5858d0', 640, 740, 690, 690, 742, 772, 690, 772) + L('#d00000', 4, [690, 712, 745, 714], [690, 772, 742, 772], [660, 740, 690, 765])) +

    // left corner
    W(L(P, 13, [75, 370, 82, 525], [75, 370, 245, 552], [90, 522, 205, 342], [208, 345, 208, 450], [240, 360, 243, 552]) + L(Y, 13, [125, 425, 188, 346]) + L(R, 12, [45, 525, 110, 430]) + T(Y, R, 13, [50, 360, 44, 525, 420], [65, 368, 207, 548, 432]) + L(R, 12, [211, 440, 207, 548], [45, 522, 200, 490]) + L(P, 14, [82, 528, 268, 485])) +

    // front truss, bars behind first
    W(L(P, 13, [400, 420, 588, 603], [245, 555, 385, 442], [592, 605, 745, 490], [770, 462, 958, 658], [960, 660, 1105, 540], [1140, 520, 1352, 716], [1355, 716, 1530, 592], [413, 440, 415, 580], [590, 430, 590, 605], [772, 470, 773, 632], [960, 485, 958, 660], [1133, 520, 1133, 685], [1355, 535, 1353, 715], [1558, 575, 1558, 747])) +
    M(L(P, 13, [162, 545, 158, 718], [377, 562, 372, 750], [597, 590, 590, 782], [848, 625, 840, 818], [1060, 655, 1052, 850], [1310, 685, 1297, 887], [1562, 720, 1550, 905], [170, 540, 372, 750], [375, 748, 570, 605], [605, 595, 840, 818], [842, 818, 1035, 675], [1065, 655, 1297, 886], [1300, 885, 1530, 735], [0, 657, 130, 555])) +
    E(L(P, 16, [105, 605, 92, 803], [118, 600, 347, 840], [370, 630, 353, 840], [365, 838, 690, 698], [718, 690, 703, 892], [740, 685, 905, 928])) +
    W(F(R, 1090, 530, 1125, 530, 1118, 582, 1070, 578)) +
    W(T(Y, R, 13, [207, 548, 390, 412, 460], [390, 412, 553, 600, 472], [553, 600, 745, 460, 510], [745, 460, 915, 655, 525], [915, 655, 1105, 503, 565], [1112, 505, 1303, 712, 578], [1303, 712, 1535, 562, 625],
        [385, 415, 378, 573, 465], [565, 430, 555, 598, 490], [743, 460, 733, 627, 515], [935, 480, 920, 655, 548], [1105, 505, 1088, 682, 530], [1328, 532, 1307, 710, 603], [1533, 560, 1507, 742, 633])) +
    M(T(Y, R, 14, [135, 535, 108, 710, 603], [145, 535, 318, 742, 610], [350, 558, 318, 742, 633], [318, 742, 575, 585, 655], [573, 588, 533, 775, 665], [583, 588, 778, 808, 675], [825, 618, 780, 805, 655], [778, 808, 1038, 648, 718], [1036, 650, 992, 840, 732], [1045, 650, 1230, 878, 742], [1285, 682, 1232, 878, 765], [1230, 878, 1535, 715, 785])) +
    E(T(Y, R, 16, [82, 600, 25, 790, 680], [95, 600, 283, 832, 692], [350, 625, 285, 830, 715], [283, 832, 690, 682, 742], [685, 685, 628, 880, 715], [705, 680, 830, 910, 775], [905, 700, 832, 910, 795]) + L(Y, 14, [0, 635, 82, 600])) +

    // right truss
    E(L(Y, 18, [1100, 565, 1060, 745], [1120, 560, 1130, 690], [1160, 530, 1110, 690], [1060, 600, 1010, 770], [1000, 640, 935, 800], [980, 660, 960, 760], [905, 790, 980, 660], [1190, 560, 1140, 660], [1195, 590, 1195, 630]) + L('#ff9900', 10, [1060, 740, 1115, 712]) + L(R, 16, [1012, 780, 845, 905], [900, 790, 838, 905]) +
      L('#3a3aa0', 12, [1480, 400, 1455, 440], [1518, 398, 1478, 405]) + T(C, B, 12, [1518, 212, 1514, 398, 282], [1480, 262, 1510, 395, 330]) + L(B, 18, [1515, 398, 1455, 440]) +
      L(P, 15, [1395, 350, 1350, 500], [1335, 380, 1300, 545], [1440, 330, 1410, 440], [1300, 430, 1315, 540], [1260, 450, 1245, 600]) +
      L('#00e8e8', 18, [1470, 262, 1464, 405], [1447, 275, 1430, 435], [1412, 305, 1365, 505], [1400, 320, 1445, 435], [1340, 370, 1362, 505], [1335, 385, 1255, 590], [1290, 405, 1262, 510], [1340, 380, 1310, 480], [1370, 400, 1385, 490]) +
      L(G, 20, [1268, 510, 1252, 600], [1240, 480, 1252, 600], [1222, 470, 1195, 600]) + T(G, Y, 15, [1180, 495, 1140, 650, 575], [1210, 485, 1170, 620, 555]) +
      L('#00e0d8', 14, [1455, 440, 1270, 590]) + L('#00c070', 6, [1410, 468, 1290, 565]) + L(G, 12, [1280, 582, 1215, 615]) +
      L(P, 17, [1215, 545, 1203, 635], [1172, 540, 1147, 692], [1060, 595, 1036, 802], [1112, 600, 1090, 745], [1002, 655, 915, 920], [990, 700, 972, 860], [1100, 600, 1040, 800]) + L('#5c5cd8', 22, [1000, 652, 1036, 802], [1118, 555, 1147, 690]) +
      L(PD, 8, [1248, 590, 1145, 680, 1040, 790, 940, 890]) + L(P, 14, [1250, 602, 908, 932]) + L(P, 22, [930, 700, 908, 928]) + L(P, 20, [858, 858, 905, 925]) +
      L(Y, 9, [1105, 545, 910, 685]) + F('#d8d800', 905, 685, 950, 655, 985, 655, 940, 688) + L(G, 10, [1185, 487, 1045, 585]) + L('#00c878', 12, [1385, 318, 1185, 487]) + L('#00e8e8', 14, [1520, 212, 1385, 322]) + L(PD, 10, [1485, 208, 1300, 372, 1115, 540]) + L(P, 18, [1120, 556, 930, 697]) + L(PD, 5, [1115, 546, 935, 688])) +

    // front chords
    L(PD, 5.500, [334, 388, 880, 462, 1259, 513.500, 1340, 526, 1636, 566]) + L(R, 4.600, [334, 388.500, 880, 463, 1259, 514, 1340, 526.500, 1636, 566.500]) + L(P, 5, [1634, 566.500, 1664, 571]) +
    L('#8888a0', 5.600, [338, 328.500, 880, 394, 1380, 456, 1668, 490.500]) + L(Y, 4.600, [338, 328.500, 880, 394.500, 1380, 456.500, 1665, 490.500]) + L(P, 5, [1663, 491, 1676, 492]) +
    F(R, 334, 380, 342, 380, 345, 390, 333, 390) +

    // axis cross
    S(L(R, 4, [185, 396, 112, 379]) + F('#b00000', 88, 374, 117, 372, 112, 385) + L(G, 4, [185, 396, 230, 370]) + F('#009a00', 225, 365, 248, 361, 238, 378) + L('#0000ff', 5, [185, 396, 185, 488]) + F('#000090', 177, 484, 193, 484, 185, 512)) +
    `<g font-size="10" font-family="Liberation Sans"><text x="341" y="751" fill="#00dd00">Y</text><text x="331" y="818" fill="#0000ff">Z</text></g>`;
    </script>
</body>
</html>
